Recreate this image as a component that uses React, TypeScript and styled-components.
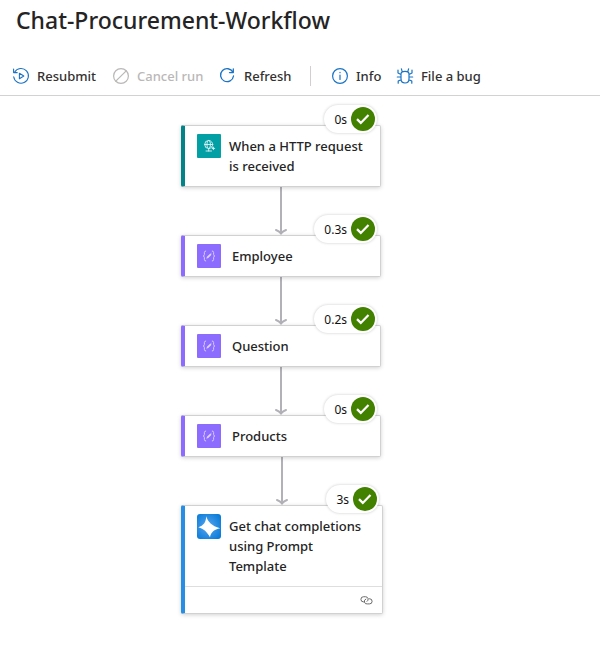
import React from 'react';
import styled, { createGlobalStyle } from 'styled-components';

const GlobalStyle = createGlobalStyle`
  * { box-sizing: border-box; }
  body {
    margin: 0;
    background: #fff;
    color: #242424;
    font-family: 'Segoe UI', 'Noto Sans', 'Open Sans', sans-serif;
  }
`;

const Page = styled.main`
  min-height: 100vh;
`;

const Title = styled.h1`
  margin: 0;
  padding: 4px 16px 0;
  font-size: 23px;
  line-height: 32px;
  font-weight: 500;
`;

const Toolbar = styled.div`
  display: flex;
  align-items: center;
  height: 40px;
  margin-top: 20px;
  padding-left: 12px;
  border-bottom: 1px solid #d2d2d2;
`;

const Command = styled.button<{ $width: number }>`
  display: flex;
  align-items: center;
  gap: 7px;
  width: ${(p) => p.$width}px;
  flex-shrink: 0;
  padding: 0;
  border: 0;
  background: none;
  color: #323130;
  font: 500 13px/20px 'Segoe UI', 'Noto Sans', 'Open Sans', sans-serif;
  white-space: nowrap;
  cursor: pointer;
  svg { flex-shrink: 0; color: #1a73c4; }
  &:disabled { color: #bab8b7; cursor: default; }
  &:disabled svg { color: #bab8b7; }
`;

const Divider = styled.span`
  width: 1px;
  height: 20px;
  margin-right: 20px;
  background: #d2d0ce;
`;

const Canvas = styled.section`
  display: flex;
  justify-content: center;
  padding: 29px 36px 36px 0;
`;

const Flow = styled.div`
  display: flex;
  flex-direction: column;
  align-items: flex-start;
  width: 202px;
`;

const Card = styled.article<{ $accent: string; $wide?: boolean }>`
  position: relative;
  width: ${(p) => (p.$wide ? 202 : 200)}px;
  border: 1px solid #d1d1d1;
  border-left: 4px solid ${(p) => p.$accent};
  border-radius: 2px;
  background: #fff;
  box-shadow: 0 1px 4px rgba(0, 0, 0, 0.18);
`;

const CardBody = styled.div<{ $multi?: boolean }>`
  display: flex;
  align-items: flex-start;
  gap: ${(p) => (p.$multi ? 8 : 11)}px;
  padding: 8px 8px ${(p) => (p.$multi ? 10 : 8)}px 12px;
  > svg { flex-shrink: 0; }
`;

const CardTitle = styled.h2`
  margin: 2px 0 0;
  font-size: 13px;
  line-height: 20px;
  font-weight: 500;
`;

const CardFooter = styled.div`
  display: flex;
  align-items: center;
  justify-content: flex-end;
  height: 27px;
  padding-right: 9px;
  border-top: 1px solid #dedede;
`;

const Badge = styled.div`
  position: absolute;
  top: -21px;
  right: 3px;
  display: flex;
  align-items: center;
  gap: 4px;
  height: 28px;
  padding: 0 2px 0 10px;
  border-radius: 14px;
  background: #fff;
  box-shadow: 0 0 3px rgba(0, 0, 0, 0.22);
  font-size: 12px;
  line-height: 20px;
  color: #111;
`;

const Duration = styled.span`
  padding-top: 2px;
`;

const Connector = styled.svg<{ $shift?: boolean }>`
  display: block;
  margin-left: ${(p) => (p.$shift ? 94 : 93)}px;
`;

const stroke = { fill: 'none', stroke: 'currentColor', strokeLinecap: 'round', strokeLinejoin: 'round' } as const;

const ResubmitIcon = () => (
  <svg width="18" height="18" viewBox="0 0 18 18" {...stroke} strokeWidth="1.1">
    <path d="M2.6 5.2A7.4 7.4 0 1 1 1.7 9.8M1.6 2v3.6H5.2M7.4 6.3v5.4L11.8 9z" />
  </svg>
);
const CancelIcon = () => (
  <svg width="18" height="18" viewBox="0 0 18 18" {...stroke} strokeWidth="1.2">
    <circle cx="9" cy="9" r="7.4" />
    <path d="M3.8 14.2 14.2 3.8" />
  </svg>
);
const RefreshIcon = () => (
  <svg width="18" height="18" viewBox="0 0 18 18" {...stroke} strokeWidth="1.3">
    <path d="M13.9 5.3A6.5 6.5 0 1 0 14.5 9M14.3 1.8v3.8h-3.8" />
  </svg>
);
const InfoIcon = () => (
  <svg width="18" height="18" viewBox="0 0 18 18" {...stroke} strokeWidth="1.2">
    <circle cx="9" cy="9" r="7.4" />
    <path d="M9 8v4.5M9 5.3v.4" />
  </svg>
);
const BugIcon = () => (
  <svg width="18" height="18" viewBox="0 0 18 18" {...stroke} strokeWidth="1.2">
    <path d="M5 7Q5 4.3 9 4.3T13 7v5Q13 16 9 16T5 12zM6.2 4.6 5.4 1.8M11.8 4.6l.8-2.8M5 7.5 2 6V3M13 7.5 16 6V3M5 10H1.3M13 10h3.7M5.2 12.6 2.2 14v2.2M12.8 12.6l3 1.4v2.2" />
  </svg>
);

const RequestIcon = () => (
  <svg width="24" height="24" viewBox="0 0 24 24" {...stroke} color="#dff5f6" strokeWidth="0.9">
    <rect width="24" height="24" rx="1" fill="#029fa5" stroke="none" />
    <circle cx="11.7" cy="10.5" r="4" />
    <ellipse cx="11.7" cy="10.5" rx="1.8" ry="4" />
    <path d="M7.7 10.5h8M11.7 14.5v2.5M9 17h5.5M14.8 13.2l1.5 1.2M16.4 13.1v2.6M15.1 14.4h2.6" />
  </svg>
);
const ComposeIcon = () => (
  <svg width="24" height="24" viewBox="0 0 24 24" {...stroke} color="#ddd2ff" strokeWidth="0.9">
    <rect width="24" height="24" rx="1" fill="#8c6cff" stroke="none" />
    <path d="M8.7 7Q7.4 7 7.4 8.5v2Q7.4 11.7 6.2 12q1.2.3 1.2 1.5v2Q7.4 17 8.7 17M15.3 7q1.3 0 1.3 1.5v2q0 1.2 1.2 1.5-1.2.3-1.2 1.5v2q0 1.5-1.3 1.5" />
    <path d="m10.6 13.4 2.8-2.8" strokeWidth="1.8" />
    <path d="m9.9 14.2.5-.5M13.4 10.3l.7-.7" />
  </svg>
);
const PromptIcon = () => (
  <svg width="24" height="25" viewBox="0 0 24 25">
    <defs>
      <radialGradient id="prompt-blue" cx="45%" cy="50%" r="65%">
        <stop offset="0" stopColor="#5ba7ed" />
        <stop offset="1" stopColor="#087bd8" />
      </radialGradient>
    </defs>
    <rect width="24" height="25" rx="3" fill="url(#prompt-blue)" />
    <path d="M9.2 2.2C11 7.8 14.4 11.8 23.2 14.2 16.9 15.6 14.2 17.8 13 23.2 10 17.8 7 14.8 1.3 13.2 6.6 11.4 9 8.4 9.2 2.2Z" fill="#fff" />
  </svg>
);
const LinkIcon = () => (
  <svg width="13" height="11" viewBox="0 0 14 12" {...stroke} color="#5c5c5c" strokeWidth="1">
    <path d="M4.2 7.5H3.7A2.8 2.8 0 0 1 3.7 1.9H6A2.8 2.8 0 0 1 7.6 7M6.3 4.4A2.8 2.8 0 0 0 8 9.7h2.2a2.8 2.8 0 0 0 .2-5.6h-.6" />
  </svg>
);
const SuccessIcon = () => (
  <svg width="24" height="24" viewBox="0 0 24 24" role="img" aria-label="Succeeded">
    <circle cx="12" cy="12" r="12" fill="#428000" />
    <path d="m6 12.1 3.8 3.8 7.7-8" fill="none" stroke="#fff" strokeWidth="2.2" />
  </svg>
);

const Arrow = ({ shift }: { shift?: boolean }) => (
  <Connector $shift={shift} width="14" height="48" viewBox="0 0 14 48" fill="none" stroke="#b1b1b7" strokeWidth="2" aria-hidden="true">
    <path d="M7 0v46M2 43q3 1 5 3.5 2-2.5 5-3.5" strokeLinecap="round" />
  </Connector>
);

type Step = { title: string; time: string; accent: string; icon: React.ReactNode; multi?: boolean; footer?: boolean };

const steps: Step[] = [
  { title: 'When a HTTP request is received', time: '0s', accent: '#038387', icon: <RequestIcon />, multi: true },
  { title: 'Employee', time: '0.3s', accent: '#8c6cff', icon: <ComposeIcon /> },
  { title: 'Question', time: '0.2s', accent: '#8c6cff', icon: <ComposeIcon /> },
  { title: 'Products', time: '0s', accent: '#8c6cff', icon: <ComposeIcon /> },
  { title: 'Get chat completions using Prompt Template', time: '3s', accent: '#278ee4', icon: <PromptIcon />, multi: true, footer: true },
];

export default function App() {
  return (
    <Page>
      <GlobalStyle />
      <Title>Chat-Procurement-Workflow</Title>
      <Toolbar role="toolbar" aria-label="Run actions">
        <Command $width={100}><ResubmitIcon />Resubmit</Command>
        <Command $width={107} disabled><CancelIcon />Cancel run</Command>
        <Command $width={91}><RefreshIcon />Refresh</Command>
        <Divider />
        <Command $width={65}><InfoIcon />Info</Command>
        <Command $width={92}><BugIcon />File a bug</Command>
      </Toolbar>
      <Canvas>
        <Flow>
          {steps.map((step, i) => (
            <React.Fragment key={step.title}>
              {i > 0 && <Arrow shift={step.footer} />}
              <Card $accent={step.accent} $wide={step.footer}>
                <CardBody $multi={step.multi}>
                  {step.icon}
                  <CardTitle>{step.title}</CardTitle>
                </CardBody>
                {step.footer && <CardFooter><LinkIcon /></CardFooter>}
                <Badge><Duration>{step.time}</Duration><SuccessIcon /></Badge>
              </Card>
            </React.Fragment>
          ))}
        </Flow>
      </Canvas>
    </Page>
  );
}
